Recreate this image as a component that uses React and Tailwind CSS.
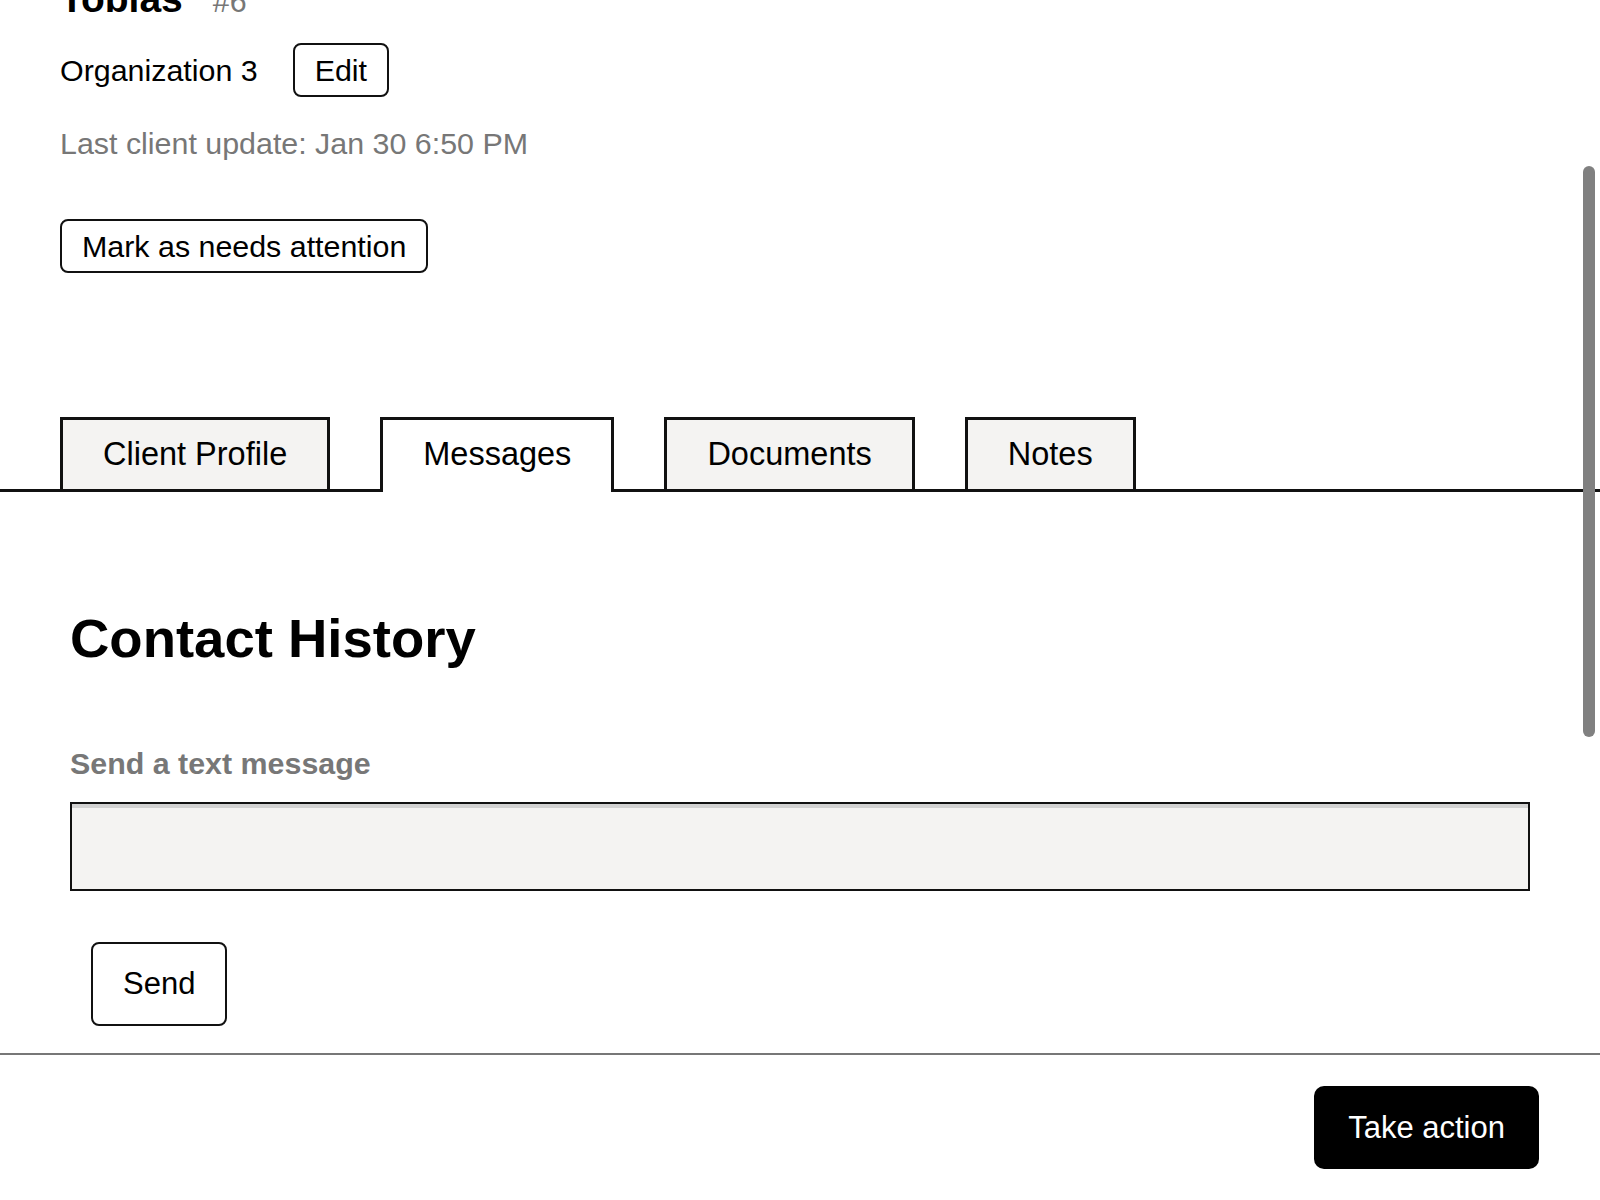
import React from "react";

const tabs = ["Client Profile", "Messages", "Documents", "Notes"];

function Tab({ label, active }) {
  if (active) {
    return (
      <div className="-mb-[3px] border-x-[3px] border-t-[3px] border-[#111] bg-white px-10 pt-4 pb-[19px] text-[32.5px] leading-[37px]">
        {label}
      </div>
    );
  }
  return (
    <div className="-mb-[3px] border-[3px] border-[#111] bg-[#f4f3f2] px-10 py-4 text-[32.5px] leading-[37px]">
      {label}
    </div>
  );
}

export default function App() {
  const current = "Messages";

  return (
    <div className="flex h-[1200px] flex-col overflow-hidden bg-white font-['Liberation_Sans',Arial,sans-serif] text-black">
      {/* scrolled client detail */}
      <div className="relative flex-1 overflow-hidden">
        <div className="-mt-[23px]">
          <div className="px-[60px]">
            <div className="flex items-baseline gap-[30px]">
              <h1 className="text-[39px] font-bold leading-[44px]">Tobias</h1>
              <span className="text-[30.4px] leading-[34px] text-[#777]">#6</span>
            </div>

            <div className="mt-[22px] flex items-center gap-[35px]">
              <span className="text-[30.4px] leading-[34px]">Organization 3</span>
              <button className="rounded-lg border-2 border-[#111] px-5 py-2 text-[30.4px] leading-[34px]">
                Edit
              </button>
            </div>

            <p className="mt-[29px] text-[30.4px] leading-[34px] text-[#777]">
              Last client update: Jan 30 6:50 PM
            </p>

            <button className="mt-[59px] rounded-lg border-2 border-[#111] px-5 py-2 text-[30.4px] leading-[34px]">
              Mark as needs attention
            </button>
          </div>

          <div className="mt-[144px] flex items-end gap-[50px] border-b-[3px] border-[#111] px-[60px]">
            {tabs.map((t) => (
              <Tab key={t} label={t} active={t === current} />
            ))}
          </div>

          <div className="px-[70px]">
            <h2 className="mt-[116px] text-[54.5px] font-bold leading-[62px]">
              Contact History
            </h2>

            <label className="mt-[76px] block text-[30.4px] font-bold leading-[34px] text-[#777]">
              Send a text message
            </label>
            <textarea
              className="mt-[22px] block h-[89px] w-full resize-none border-2 border-[#111] bg-[#f4f3f2] shadow-[inset_0_4px_0_0_#d2d2d2] outline-none"
              defaultValue=""
            />

            <button className="mt-[51px] ml-[21px] rounded-lg border-2 border-[#111] px-[30px] py-[22px] text-[31px] leading-[36px]">
              Send
            </button>
          </div>
        </div>

        {/* overlay scroll thumb */}
        <div className="absolute right-[5px] top-[166px] h-[571px] w-[12px] rounded-full bg-[#808080]" />
      </div>

      {/* footer */}
      <div className="flex h-[147px] shrink-0 justify-end border-t-2 border-[#777] px-[61px] pt-[31px]">
        <div>
          <button className="rounded-[10px] bg-black px-[34px] py-[23.5px] text-[31px] leading-[36px] text-white">
            Take action
          </button>
        </div>
      </div>
    </div>
  );
}
